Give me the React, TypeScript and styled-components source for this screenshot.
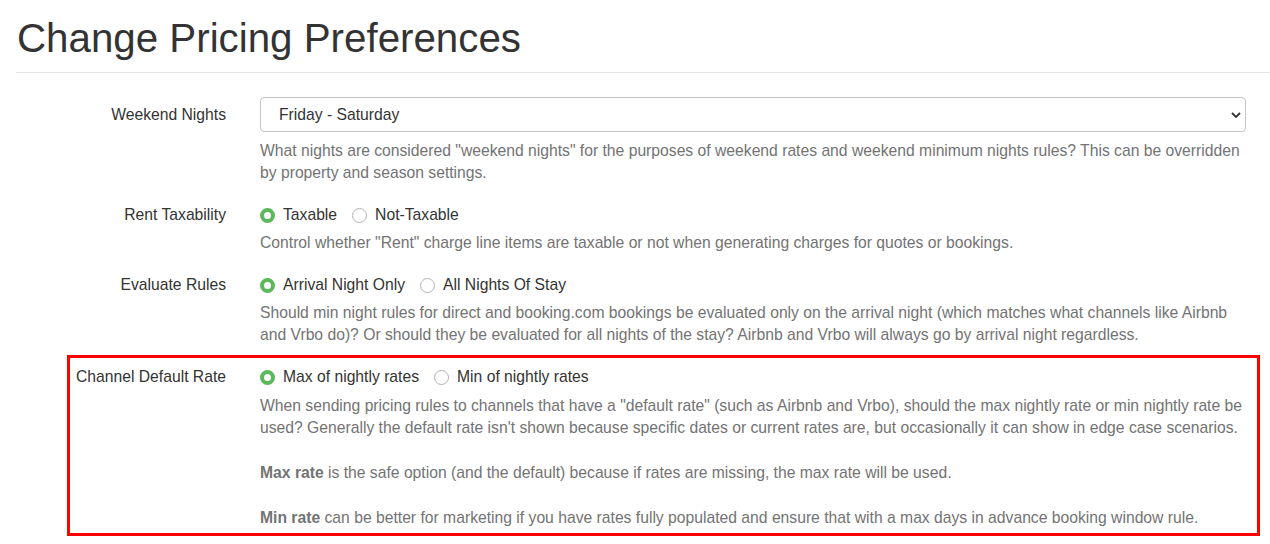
import React from 'react';
import styled, { createGlobalStyle } from 'styled-components';

const GlobalStyle = createGlobalStyle`
  html, body {
    margin: 0;
    padding: 0;
    background: #fff;
  }
  body {
    font-family: 'Liberation Sans', Arial, sans-serif;
    font-size: 15.7px;
    color: #333;
  }
`;

const Page = styled.div`
  min-height: 544px;
  box-sizing: border-box;
  padding-left: 16px;
`;

const Title = styled.h1`
  margin: 17px 0 11px 1px;
  font-size: 40.3px;
  line-height: 44px;
  font-weight: 400;
  color: #333;
`;

const Rule = styled.hr`
  margin: 0;
  border: 0;
  border-top: 1px solid #e3e3e3;
`;

const Form = styled.form`
  display: flex;
  flex-direction: column;
  gap: 20px;
  padding: 24px 24px 0 0;
`;

const Row = styled.div<{ $highlight?: boolean }>`
  display: grid;
  grid-template-columns: 210px 1fr;
  column-gap: 34px;
  position: relative;

  ${(p) =>
    p.$highlight &&
    `
    &::after {
      content: '';
      position: absolute;
      top: -11px;
      bottom: -7px;
      left: 51px;
      right: -14px;
      border: 3px solid #ff0000;
      pointer-events: none;
    }
  `}
`;

const Label = styled.label<{ $offset?: number }>`
  text-align: right;
  line-height: 22px;
  padding-top: ${(p) => p.$offset ?? 0}px;
  color: #333;
  white-space: nowrap;
`;

const Control = styled.div`
  min-width: 0;
`;

const SelectWrap = styled.div`
  position: relative;
`;

const Select = styled.select`
  appearance: none;
  -webkit-appearance: none;
  width: 100%;
  height: 35px;
  box-sizing: border-box;
  padding: 0 30px 0 18px;
  border: 1px solid #c4c4c4;
  border-radius: 4px;
  background: #fff;
  font-family: inherit;
  font-size: 15.7px;
  color: #333;
`;

const Chevron = styled.svg`
  position: absolute;
  right: 5px;
  top: 15px;
  pointer-events: none;
`;

const Options = styled.div`
  display: flex;
  align-items: center;
  height: 22px;
`;

const Option = styled.label`
  display: flex;
  align-items: center;
  gap: 8px;
  margin-right: 15px;
  line-height: 22px;
  color: #333;
`;

const RadioDot = styled.span<{ $checked?: boolean }>`
  box-sizing: border-box;
  width: 15px;
  height: 15px;
  border-radius: 50%;
  background: #fff;
  border: ${(p) => (p.$checked ? '4.5px solid #5cb85c' : '1px solid #b3b3b3')};
  margin-top: 1px;
`;

const Help = styled.div<{ $top?: number }>`
  margin-top: ${(p) => p.$top ?? 7}px;
  color: #737373;
  line-height: 22px;

  & > p {
    margin: 0 0 23px;
  }
  & > p:last-child {
    margin-bottom: 0;
  }
  & b {
    font-weight: 700;
  }
`;

type Choice = { label: string; checked?: boolean };

const Radios = ({ choices }: { choices: Choice[] }) => (
  <Options>
    {choices.map((c) => (
      <Option key={c.label}>
        <RadioDot $checked={c.checked} />
        {c.label}
      </Option>
    ))}
  </Options>
);

export default function App() {
  return (
    <Page>
      <GlobalStyle />
      <Title>Change Pricing Preferences</Title>
      <Rule />
      <Form>
        <Row>
          <Label $offset={7}>Weekend Nights</Label>
          <Control>
            <SelectWrap>
              <Select defaultValue="fs">
                <option value="fs">Friday - Saturday</option>
              </Select>
              <Chevron width="10" height="6" viewBox="0 0 10 6">
                <path d="M1 1 L5 5 L9 1" fill="none" stroke="#333" strokeWidth="1.8" />
              </Chevron>
            </SelectWrap>
            <Help $top={8}>
              What nights are considered "weekend nights" for the purposes of weekend rates and
              weekend minimum nights rules? This can be overridden by property and season settings.
            </Help>
          </Control>
        </Row>

        <Row>
          <Label>Rent Taxability</Label>
          <Control>
            <Radios choices={[{ label: 'Taxable', checked: true }, { label: 'Not-Taxable' }]} />
            <Help $top={6}>
              Control whether "Rent" charge line items are taxable or not when generating charges
              for quotes or bookings.
            </Help>
          </Control>
        </Row>

        <Row>
          <Label>Evaluate Rules</Label>
          <Control>
            <Radios
              choices={[{ label: 'Arrival Night Only', checked: true }, { label: 'All Nights Of Stay' }]}
            />
            <Help $top={6}>
              Should min night rules for direct and booking.com bookings be evaluated only on the
              arrival night (which matches what channels like Airbnb and Vrbo do)? Or should they be
              evaluated for all nights of the stay? Airbnb and Vrbo will always go by arrival night
              regardless.
            </Help>
          </Control>
        </Row>

        <Row $highlight>
          <Label>Channel Default Rate</Label>
          <Control>
            <Radios
              choices={[{ label: 'Max of nightly rates', checked: true }, { label: 'Min of nightly rates' }]}
            />
            <Help>
              <p>
                When sending pricing rules to channels that have a "default rate" (such as Airbnb
                and Vrbo), should the max nightly rate or min nightly rate be used? Generally the
                default rate isn't shown because specific dates or current rates are, but
                occasionally it can show in edge case scenarios.
              </p>
              <p>
                <b>Max rate</b> is the safe option (and the default) because if rates are missing,
                the max rate will be used.
              </p>
              <p>
                <b>Min rate</b> can be better for marketing if you have rates fully populated and
                ensure that with a max days in advance booking window rule.
              </p>
            </Help>
          </Control>
        </Row>
      </Form>
    </Page>
  );
}
